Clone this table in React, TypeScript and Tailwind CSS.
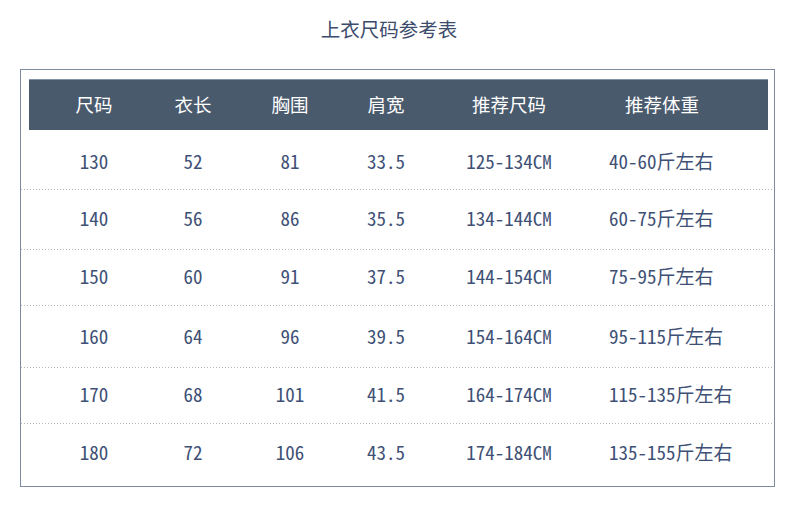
const headers = ["尺码", "衣长", "胸围", "肩宽", "推荐尺码"];

const rows = [
  { size: "130", len: "52", chest: "81", shoulder: "33.5", range: "125-134CM", weight: "40-60斤左右", h: "h-[59px] pt-[4px]" },
  { size: "140", len: "56", chest: "86", shoulder: "35.5", range: "134-144CM", weight: "60-75斤左右", h: "h-[59px] pb-[3px]" },
  { size: "150", len: "60", chest: "91", shoulder: "37.5", range: "144-154CM", weight: "75-95斤左右", h: "h-[55px] pb-[2px]" },
  { size: "160", len: "64", chest: "96", shoulder: "39.5", range: "154-164CM", weight: "95-115斤左右", h: "h-[61px]" },
  { size: "170", len: "68", chest: "101", shoulder: "41.5", range: "164-174CM", weight: "115-135斤左右", h: "h-[55px] pb-[3px]" },
  { size: "180", len: "72", chest: "106", shoulder: "43.5", range: "174-184CM", weight: "135-155斤左右", h: "h-[62px] pb-[5px]" },
];

// column widths measured from the reference, header and body share them
const cols = "grid grid-cols-[130px_68px_126px_66px_180px_168px]";

const mono = "font-['Noto_Sans_Mono_CJK_SC','Noto_Sans_CJK_SC',monospace]";

function Dots() {
  return (
    <div className="h-px w-full bg-[repeating-linear-gradient(90deg,#b9b9b9_0_1px,transparent_1px_3px)]" />
  );
}

export default function App() {
  return (
    <div className="h-[525px] w-[790px] bg-white font-['Noto_Sans_CJK_SC',sans-serif]">
      <h1 className="pt-[18px] pr-[12px] text-center text-[19.5px] leading-[22px] font-normal text-[#3d4c6c]">
        上衣尺码参考表
      </h1>

      <div className="mt-[29px] ml-[20px] w-[755px] border border-[#7d8ca3]">
        <div className="mt-[9px] ml-[8px] mr-[6px] h-[51px] border-t border-[#8493a8] bg-[#4a5a6d] text-white">
          <div className={`${cols} h-full items-center text-[18.5px]`}>
            {headers.map((h) => (
              <div key={h} className="text-center">
                {h}
              </div>
            ))}
            <div className="pl-[26px]">推荐体重</div>
          </div>
        </div>

        {rows.map((r, i) => (
          <div key={r.size}>
            <div
              className={`${cols} ${r.h} ${mono} ml-[8px] items-center text-[19px] text-[#3e5075]`}
            >
              <div className="text-center">{r.size}</div>
              <div className="text-center">{r.len}</div>
              <div className="text-center">{r.chest}</div>
              <div className="text-center">{r.shoulder}</div>
              <div className="text-center">{r.range}</div>
              <div className="pl-[10px]">{r.weight}</div>
            </div>
            {i < rows.length - 1 && <Dots />}
          </div>
        ))}
      </div>
    </div>
  );
}
